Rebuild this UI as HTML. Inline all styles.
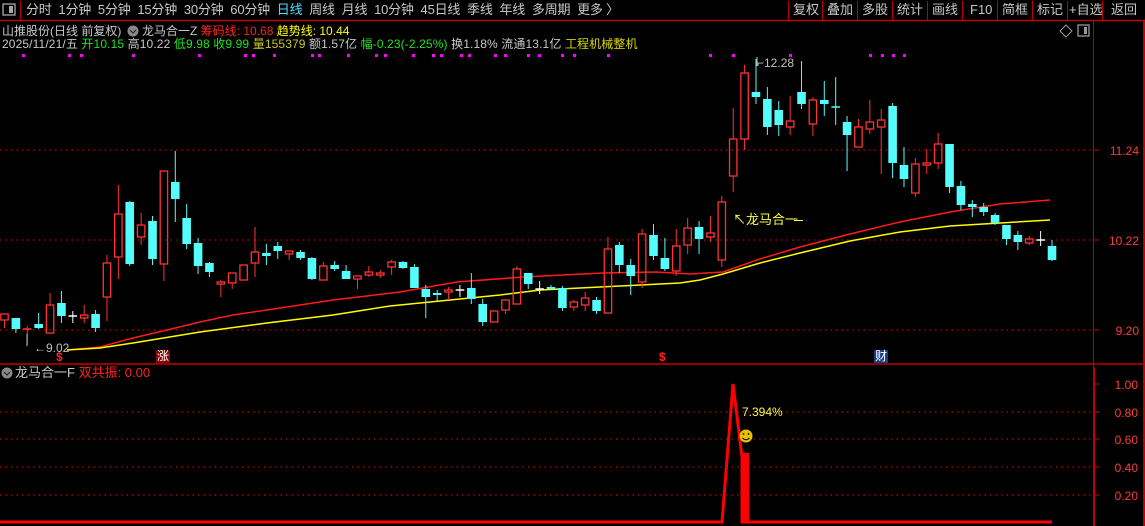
<!DOCTYPE html>
<html><head><meta charset="utf-8">
<style>
html,body{margin:0;padding:0;background:#000;width:1145px;height:526px;overflow:hidden}
body{position:relative;font-family:"Liberation Sans","Noto Sans CJK SC",sans-serif;font-size:12px;color:#c8c8c8}
.t{position:absolute;white-space:nowrap;line-height:14px}
svg{position:absolute;left:0;top:0}
</style></head><body>
<svg id="s" width="1145" height="526" xmlns="http://www.w3.org/2000/svg">
<line x1="0" y1="20.5" x2="1145" y2="20.5" stroke="#c00000" stroke-width="1.5"/>
<rect x="3" y="4" width="12" height="11" fill="none" stroke="#aaa" stroke-width="1.3"/><rect x="9" y="6" width="4" height="7" fill="#aaa"/>
<line x1="20.5" y1="1" x2="20.5" y2="20" stroke="#c00000"/>
<g stroke="#c00000"><line x1="788.5" y1="1" x2="788.5" y2="20"/><line x1="822.5" y1="1" x2="822.5" y2="20"/><line x1="857.5" y1="1" x2="857.5" y2="20"/><line x1="892.5" y1="1" x2="892.5" y2="20"/><line x1="927.5" y1="1" x2="927.5" y2="20"/><line x1="962.5" y1="1" x2="962.5" y2="20"/><line x1="997.5" y1="1" x2="997.5" y2="20"/><line x1="1032.5" y1="1" x2="1032.5" y2="20"/><line x1="1067.5" y1="1" x2="1067.5" y2="20"/><line x1="1102.5" y1="1" x2="1102.5" y2="20"/></g>
<line x1="1093.5" y1="21" x2="1093.5" y2="526" stroke="#c00000"/>
<line x1="1094" y1="367" x2="1094" y2="526" stroke="#c00000" stroke-width="2"/>
<line x1="1144" y1="21" x2="1144" y2="526" stroke="#c00000" stroke-width="2"/>
<line x1="0" y1="364" x2="1145" y2="364" stroke="#c00000" stroke-width="1.5"/>
<g stroke="#c00000" stroke-dasharray="1.5,4" stroke-width="1.2">
<line x1="0" y1="150" x2="1093" y2="150"/><line x1="0" y1="240" x2="1093" y2="240"/><line x1="0" y1="330" x2="1093" y2="330"/>
<line x1="0" y1="412" x2="1093" y2="412"/><line x1="0" y1="439" x2="1093" y2="439"/><line x1="0" y1="467" x2="1093" y2="467"/><line x1="0" y1="495" x2="1093" y2="495"/>
</g>
<g stroke="#c00000"><line x1="1093" y1="150" x2="1099" y2="150"/><line x1="1093" y1="240" x2="1099" y2="240"/><line x1="1093" y1="330" x2="1099" y2="330"/>
<line x1="1094" y1="384" x2="1100" y2="384"/><line x1="1094" y1="412" x2="1100" y2="412"/><line x1="1094" y1="439" x2="1100" y2="439"/><line x1="1094" y1="467" x2="1100" y2="467"/><line x1="1094" y1="495" x2="1100" y2="495"/></g>
<g fill="#ff3a3a" font-size="12" font-family="Liberation Sans,sans-serif" text-anchor="end">
<text x="1139" y="155">11.24</text><text x="1139" y="245">10.22</text><text x="1139" y="335">9.20</text>
<text x="1138" y="389">1.00</text><text x="1138" y="417">0.80</text><text x="1138" y="444">0.60</text><text x="1138" y="472">0.40</text><text x="1138" y="500">0.20</text></g>
<polyline fill="none" stroke="#ff1a1a" stroke-width="1.5" points="67,350 100,347 133,338 167,330 200,322 233,315 267,310 300,305 333,300 367,296 400,292 457,282 523,277 603,273 657,272 690,274 723,272 760,259 800,247 850,234 900,222 950,212 1000,204 1050,200"/>
<polyline fill="none" stroke="#ffff00" stroke-width="1.5" points="67,350 100,348 133,343 200,332 267,323 333,315 390,306 420,303 460,299 500,295 540,290 580,288 620,286 680,283 700,280 723,274 760,263 800,253 850,241 900,232 950,226 1000,223 1050,220"/>
<g id="c"></g>
<polyline fill="none" stroke="#ff0000" stroke-width="3" points="0,522 722,522 733,384 742,457 742,522 1052,522"/>
<rect x="742" y="453" width="7" height="69" fill="#ff0000"/>
<circle cx="746" cy="436" r="6.5" fill="#e8c000"/><circle cx="743.5" cy="434" r="0.9" fill="#000"/><circle cx="748.5" cy="434" r="0.9" fill="#000"/><path d="M742.5 438 Q746 441.5 749.5 438" stroke="#000" fill="none" stroke-width="0.9"/>
<rect x="156" y="350" width="14" height="13" fill="#8b0000"/>
<rect x="874" y="350" width="14" height="13" fill="#1a3f80"/>
<line x1="27" y1="334" x2="27" y2="346" stroke="#c0c0c0"/>
<line x1="757" y1="57" x2="757" y2="66" stroke="#c0c0c0"/>
<path d="M1060 31 L1066 25 L1072 31 L1066 37 Z" fill="none" stroke="#999"/>
<rect x="1078" y="25" width="11" height="11" fill="none" stroke="#999" stroke-width="1.3"/><rect x="1084" y="27" width="3" height="7" fill="#999"/>
<circle cx="133" cy="31" r="5.5" fill="#888"/><path d="M130 30 L133 33 L136 30" stroke="#222" fill="none"/>
<circle cx="7" cy="373" r="5.5" fill="#888"/><path d="M4 372 L7 375 L10 372" stroke="#222" fill="none"/>
</svg>

<div class="t" style="left:26px;top:3px;font-size:13px;letter-spacing:-0.2px">分时&nbsp; 1分钟&nbsp; 5分钟&nbsp; 15分钟&nbsp; 30分钟&nbsp; 60分钟&nbsp; <span style="color:#4fe0ff">日线</span>&nbsp; 周线&nbsp; 月线&nbsp; 10分钟&nbsp; 45日线&nbsp; 季线&nbsp; 年线&nbsp; 多周期&nbsp; 更多 〉</div>
<div class="t" style="left:793px;top:3px;font-size:13px">复权</div>
<div class="t" style="left:827px;top:3px;font-size:13px">叠加</div>
<div class="t" style="left:862px;top:3px;font-size:13px">多股</div>
<div class="t" style="left:897px;top:3px;font-size:13px">统计</div>
<div class="t" style="left:932px;top:3px;font-size:13px">画线</div>
<div class="t" style="left:970px;top:3px;font-size:13px">F10</div>
<div class="t" style="left:1002px;top:3px;font-size:13px">简框</div>
<div class="t" style="left:1037px;top:3px;font-size:13px">标记</div>
<div class="t" style="left:1069px;top:3px;font-size:13px">+自选</div>
<div class="t" style="left:1111px;top:3px;font-size:13px">返回</div>

<div class="t" style="left:2px;top:24px">山推股份(日线 前复权)</div>
<div class="t" style="left:142px;top:24px">龙马合一Z <span style="color:#ff2020">筹码线: 10.68</span> <span style="color:#ffff00">趋势线: 10.44</span></div>
<div class="t" style="left:2px;top:37px;letter-spacing:0.12px">2025/11/21/五 <span style="color:#20e020">开10.15</span> 高10.22 <span style="color:#20e020">低9.98</span> <span style="color:#20e020">收9.99</span> <span style="color:#c8c820">量155379</span> 额1.57亿 <span style="color:#20e020">幅-0.23(-2.25%)</span> 换1.18% 流通13.1亿 <span style="color:#d8d800">工程机械整机</span></div>

<div class="t" style="left:34px;top:341px;color:#c0c0c0">←9.02</div>
<div class="t" style="left:757px;top:56px;color:#c0c0c0">⌐12.28</div>
<div class="t" style="left:56px;top:350px;color:#ff2020;font-weight:bold;font-size:12px">$</div>
<div class="t" style="left:659px;top:350px;color:#ff2020;font-weight:bold;font-size:12px">$</div>
<div class="t" style="left:157px;top:349px;color:#fff;font-size:12px">涨</div>
<div class="t" style="left:875px;top:349px;color:#fff;font-size:12px">财</div>
<div class="t" style="left:733px;top:213px;color:#ffff40;font-size:13px">↖龙马合一</div>
<div style="position:absolute;left:794px;top:220px;width:9px;height:1px;background:#ffff40"></div>
<div class="t" style="left:15px;top:366px;font-size:13px">龙马合一F <span style="color:#ff2020">双共振: 0.00</span></div>
<div class="t" style="left:742px;top:405px;color:#ffff40">7.394%</div>

<script>
var d=[
["R",314,320,314,328],["C",318,329,318,333],["F",329,329,326,345],["C",324,328,313,329],["R",305,333,293,333],["C",303,316,291,323],["W",316,316,311,323],["R",315,318,305,323],["C",314,328,310,332],["R",263,297,255,321],
["R",214,257,185,279],["C",202,264,201,266],["R",225,237,213,245],["C",221,259,216,265],["R",171,264,171,281],["C",182,199,151,222],["C",218,244,204,249],["C",243,266,238,274],["C",263,272,262,277],["R",282,284,280,297],
["R",273,283,273,289],["R",265,280,265,280],["R",252,263,227,277],["C",253,256,244,265],["C",246,251,242,259],["R",251,254,251,260],["C",252,258,250,260],["C",258,279,257,280],["R",266,280,262,280],["C",265,269,261,271],
["C",271,279,265,279],["R",276,279,276,289],["R",272,275,266,277],["R",273,275,270,278],["R",262,267,260,275],["C",262,268,261,269],["C",267,288,264,288],["C",289,297,285,318],["C",293,295,290,301],["R",290,292,287,300],
["W",290,290,285,297],["C",288,299,273,304],["C",304,322,299,326],["R",311,322,311,322],["R",300,310,299,314],["R",269,304,266,304],["C",273,284,273,289],["W",289,289,281,294],["C",287,289,285,290],["C",288,308,286,311],
["R",302,307,300,311],["R",298,305,292,311],["C",300,311,297,314],["R",249,313,237,313],["C",245,265,242,273],["C",265,276,259,295],["R",234,282,229,288],["C",235,256,224,260],["C",258,269,238,271],["R",246,271,229,276],
["R",228,245,218,254],["C",227,239,221,254],["R",233,237,216,242],["R",202,260,196,267],["R",139,176,108,192],["R",73,139,65,150],["C",92,97,59,104],["C",99,127,87,135],["C",110,125,101,136],["R",121,127,96,135],
["C",92,104,61,109],["R",100,124,97,136],["C",100,104,81,116],["X",107,107,77,125],["C",122,135,116,171],["R",127,147,119,147],["R",122,129,100,134],["R",120,127,109,174],["C",106,163,103,178],["C",165,179,147,187],
["R",164,193,158,197],["R",163,165,149,174],["R",144,163,133,169],["C",144,187,144,193],["C",186,205,181,210],["C",204,207,200,217],["C",207,212,203,216],["C",215,223,213,225],["C",225,239,225,245],["C",235,242,231,250],
["R",239,243,236,245],["W",240,240,231,246],["C",246,260,240,261]];
var g=document.getElementById("c"),h="";
for(var i=0;i<d.length;i++){var x=4.5+i*11.386,c=d[i],t=c[0];
var col=t=="R"||t=="F"?"#ff3232":t=="W"?"#ffffff":"#54fcfc";
if(t=="R"){h+='<line x1="'+x+'" y1="'+c[3]+'" x2="'+x+'" y2="'+c[1]+'" stroke="'+col+'"/><line x1="'+x+'" y1="'+c[2]+'" x2="'+x+'" y2="'+c[4]+'" stroke="'+col+'"/>';
h+='<rect x="'+(x-3.7)+'" y="'+c[1]+'" width="7.4" height="'+Math.max(c[2]-c[1],1.5)+'" fill="none" stroke="'+col+'" stroke-width="1.3"/>';}
else if(t=="C"){h+='<line x1="'+x+'" y1="'+c[3]+'" x2="'+x+'" y2="'+c[4]+'" stroke="'+col+'"/><rect x="'+(x-4.3)+'" y="'+c[1]+'" width="8.6" height="'+Math.max(c[2]-c[1],2)+'" fill="'+col+'"/>';}
else{h+='<line x1="'+x+'" y1="'+c[3]+'" x2="'+x+'" y2="'+c[4]+'" stroke="'+col+'"/><line x1="'+(x-4.3)+'" y1="'+c[1]+'" x2="'+(x+4.3)+'" y2="'+c[1]+'" stroke="'+col+'" stroke-width="1.5"/>';}}
var dots=[22,68,80,132,198,244,252,273,311,318,347,375,384,412,432,440,460,468,494,504,527,538,561,573,607,709,732,789,869,881,892,903];
for(var j=0;j<dots.length;j++)h+='<rect x="'+dots[j]+'" y="54" width="3" height="3" fill="#ff00ff"/>';
g.innerHTML=h;
</script>
</body></html>
